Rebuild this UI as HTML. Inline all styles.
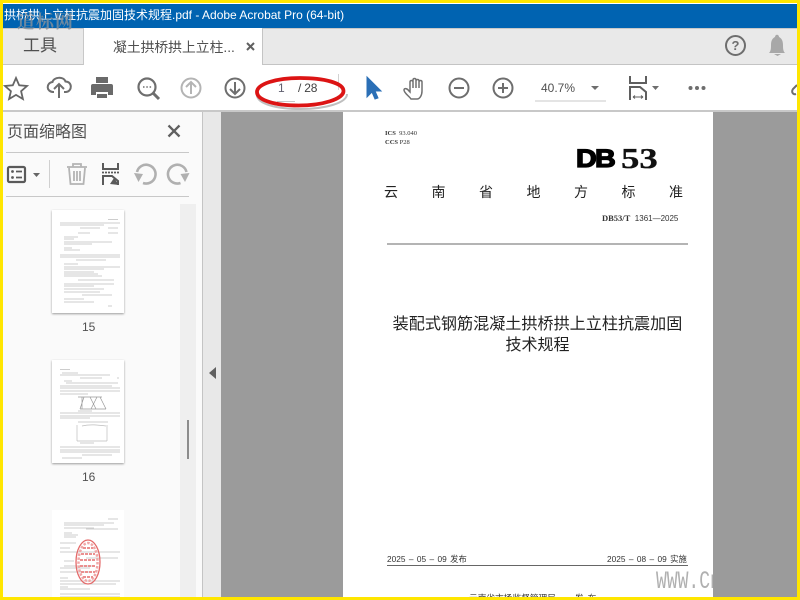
<!DOCTYPE html>
<html><head><meta charset="utf-8">
<style>
html,body{margin:0;padding:0;width:800px;height:600px;overflow:hidden;background:#fff}
body{position:relative;font-family:"Liberation Sans","Noto Sans CJK SC",sans-serif}
.a{position:absolute;white-space:nowrap}
svg{position:absolute;overflow:visible}
.s{font-family:"Liberation Serif","Noto Serif CJK SC",serif}
</style></head><body>
<div class="a" style="left:0;top:4px;width:800px;height:24px;background:#0063b1"></div>
<div class="a" style="left:4px;top:7px;color:#fff;font-size:12px;line-height:16px">拱桥拱上立柱抗震加固技术规程.pdf - Adobe Acrobat Pro (64-bit)</div>
<div class="a" style="left:0;top:28px;width:800px;background:#e9e9e9;border-top:1px solid #c8c8c8;border-bottom:1px solid #c4c4c4;box-sizing:border-box;height:37px"></div>
<div class="a" style="left:83px;top:28px;width:180px;height:37px;background:#fff;border-left:1px solid #c8c8c8;border-right:1px solid #c4c4c4;box-sizing:border-box"></div>
<div class="a" style="left:23px;top:36px;font-size:17px;line-height:20px;color:#505050">工具</div>
<div class="a" style="left:113px;top:38px;font-size:13.800px;line-height:20px;color:#505050">凝土拱桥拱上立柱...</div>
<div class="a s" style="left:17px;top:11px;font-size:18px;letter-spacing:1px;line-height:22px;color:rgba(135,145,155,.8);font-weight:700">道标网</div>
<svg style="left:0;top:0" width="800" height="110">
<path d="M247 43l7 7M254 43l-7 7" stroke="#606060" stroke-width="2"/>
<circle cx="735.500" cy="45.500" r="9.500" fill="none" stroke="#6e6e6e" stroke-width="2"/>
<text x="735.500" y="50" font-size="13" font-weight="700" fill="#6e6e6e" text-anchor="middle" font-family="Liberation Sans">?</text>
<path d="M769 53c2-2 2-5 2-8 0-5 2-7 4-8 0-3 4-3 4 0 2 1 4 3 4 8 0 3 0 6 2 8zM774 54h7l-3.500 2z" fill="#a8a8a8"/>
<path d="M16 78l3.200 7.300 7.800.7-5.900 5.200 1.800 7.800-6.900-4.100-6.900 4.100 1.800-7.800-5.900-5.200 7.800-.7z" fill="none" stroke="#666" stroke-width="1.800"/>
<path d="M54 92h-1c-7-.5-7-9-.5-10 1-5 11-6 13-.5 7 0 7 10 .5 10.500h-2" fill="none" stroke="#6e6e6e" stroke-width="2"/><path d="M59 98V84M54 89l5-5 5 5" fill="none" stroke="#6e6e6e" stroke-width="2"/>
<path d="M96 77h12v6H96zM93 84h18a2 2 0 012 2v9h-5v-3H96v3h-5v-9a2 2 0 012-2zM97 94h10v4H97z" fill="#6a6a6a"/>
<circle cx="147" cy="87" r="8.500" fill="none" stroke="#6e6e6e" stroke-width="2.200"/><path d="M153 93l6 6" stroke="#6e6e6e" stroke-width="3"/><path d="M143 87h1.500M146.300 87h1.500M149.600 87h1.500" stroke="#6e6e6e" stroke-width="1.600"/>
<circle cx="191" cy="88" r="9.500" fill="none" stroke="#b4b4b4" stroke-width="2"/><path d="M191 94V82M186 87l5-5 5 5" fill="none" stroke="#b4b4b4" stroke-width="2"/>
<circle cx="235" cy="88" r="9.500" fill="none" stroke="#6e6e6e" stroke-width="2"/><path d="M235 82v12M230 89l5 5 5-5" fill="none" stroke="#6e6e6e" stroke-width="2"/>
<path d="M338.500 74v16" stroke="#d2d2d2"/>
<path d="M367 77v20l5-5 3 7 3-1-3-7h6z" fill="#2b6fb6" stroke="#2b6fb6" stroke-width="1"/>
<path d="M411 99c-2-3-7-6-7-9 0-2 3-2 5 1l1 1V82c0-2 3-2 3 0v-2c0-2 3-2 3 0v1c0-2 3-2 3 0v1c0-2 3-2 3 0v9c0 4-2 8-5 8zM413 82v6M416 80v8M419 81v7" fill="none" stroke="#707070" stroke-width="1.500"/>
<circle cx="459" cy="88" r="9.500" fill="none" stroke="#6e6e6e" stroke-width="2"/><path d="M454 88h10" stroke="#6e6e6e" stroke-width="2"/>
<circle cx="503" cy="88" r="9.500" fill="none" stroke="#6e6e6e" stroke-width="2"/><path d="M498 88h10M503 83v10" stroke="#6e6e6e" stroke-width="2"/>
<path d="M535 101h71" stroke="#c8c8c8"/><path d="M591 86h8l-4 4z" fill="#6e6e6e"/>
<path d="M630 76v7h16v-7" fill="none" stroke="#5f5f5f" stroke-width="2"/><path d="M630 100V87h10l6 5v8" fill="none" stroke="#5f5f5f" stroke-width="2"/><path d="M633 97h10M633 97l2-1.500M633 97l2 1.500M643 97l-2-1.500M643 97l-2 1.500" stroke="#5f5f5f"/><path d="M652 86h7l-3.500 4z" fill="#6e6e6e"/>
<circle cx="690.500" cy="88" r="2" fill="#6e6e6e"/><circle cx="697" cy="88" r="2" fill="#6e6e6e"/><circle cx="703.500" cy="88" r="2" fill="#6e6e6e"/>
<path d="M797 85l-4 4c-2 3 0 6 3 5" fill="none" stroke="#6e6e6e" stroke-width="2"/>
<path d="M277 101.500h18" stroke="#c8c8c8"/>
</svg>
<div class="a" style="left:278px;top:80px;font-size:12px;line-height:16px;color:#606070">1</div>
<div class="a" style="left:298px;top:80px;font-size:12px;line-height:16px;letter-spacing:-.2px;color:#404040">/ 28</div>
<div class="a" style="left:541px;top:80px;font-size:12px;line-height:16px;color:#505050">40.7%</div>

<div class="a" style="left:0;top:110px;width:800px;height:2px;background:#c8c8c8"></div>
<div class="a" style="left:0;top:112px;width:202px;height:488px;background:#fafafa;border-right:1px solid #c4c4c4"></div>
<div class="a" style="left:203px;top:112px;width:18px;height:488px;background:#e8e8e8"></div>
<div class="a" style="left:221px;top:112px;width:579px;height:488px;background:#9b9b9b"></div>
<div class="a" style="left:180px;top:204px;width:16px;height:396px;background:#efefef"></div>
<div class="a" style="left:187px;top:420px;width:2px;height:39px;background:#8c8c8c"></div>
<svg style="left:0;top:0" width="230" height="400">
<path d="M6 152.500h183M6 196.500h183" stroke="#c8c8c8"/>
<path d="M168.500 125.500l11 11M179.500 125.500l-11 11" stroke="#606060" stroke-width="2.300"/>
<rect x="8" y="167" width="17" height="15" rx="1.500" fill="none" stroke="#5a5a5a" stroke-width="2.200"/><circle cx="12.500" cy="171.500" r="1.400" fill="#5a5a5a"/><circle cx="12.500" cy="177.500" r="1.400" fill="#5a5a5a"/><path d="M16 171.500h6M16 177.500h6" stroke="#5a5a5a" stroke-width="1.800"/>
<path d="M33 173h7l-3.500 4z" fill="#666"/><path d="M49.500 160v28" stroke="#d0d0d0"/>
<path d="M67 167h20M73 167v-3h8v3M69 168l1.500 16h13l1.500-16M74 171v10M77 171v10M80 171v10" fill="none" stroke="#b4b4b4" stroke-width="1.800"/>
<path d="M103 163v6h15v-6" fill="none" stroke="#5a5a5a" stroke-width="2"/><path d="M102 172.500h17" stroke="#5a5a5a" stroke-width="1.800" stroke-dasharray="2 1"/>
<path d="M103 185v-9h9l6 5v4" fill="none" stroke="#5a5a5a" stroke-width="2"/><path d="M110 184l4-6 5 7z" fill="#5a5a5a"/>
<path d="M143 183A9.400 9.400 0 1 0 137 172" fill="none" stroke="#b0b0b0" stroke-width="2.600"/><path d="M134 173l9 1-4.500 8z" fill="#b0b0b0"/>
<path d="M180.500 183A9.400 9.400 0 1 1 186.500 172" fill="none" stroke="#b0b0b0" stroke-width="2.600"/><path d="M189.500 173l-9 1 4.500 8z" fill="#b0b0b0"/>
<path d="M209 373l7-6v12z" fill="#606060"/>
</svg>
<div class="a" style="left:7px;top:123px;font-size:16px;line-height:20px;color:#505050">页面缩略图</div>

<svg style="left:52px;top:210px" width="72" height="103">
<rect width="72" height="103" fill="#fff" style="filter:drop-shadow(0 1px 1px #999)"/>
<g stroke="#bdbdbd" stroke-width=".7" fill="none">
<path d="M56 9.500h10M8 13h60M8 15h44M28 18h20M56 18h10M26 23h12M56 23h10M12 27h14M12 29h10M12 32h48M12 34h28M12 38h8M12 40h16M8 45h60M8 47h60M24 50h30M12 54h14M12 57h56M12 59h40M12 62h30M12 64h34M12 66h38M26 70h36M12 74h50M12 76h30M12 79h40M12 82h36M30 85h30M12 89h20M12 92h30M56 96h4"/>
</g></svg>
<div class="a" style="left:82px;top:320px;font-size:12px;line-height:15px;color:#505050">15</div>
<svg style="left:52px;top:360px" width="72" height="103">
<rect width="72" height="103" fill="#fff" style="filter:drop-shadow(0 1px 1px #999)"/>
<g stroke="#bdbdbd" stroke-width=".7" fill="none">
<path d="M8 9.500h10M10 13h16M8 15h50M28 18h22M65 18h2M12 21h8M14 23h52M8 26h52M8 28h60M8 31h60M8 34h28"/>
<path d="M26 37h24M32 37l-4 12M38 37l6 12M45 37l-6 12M48 37l6 12M28 49h26M30 37v12" stroke="#999"/>
<path d="M26 51h14M8 53h60M8 56h60M8 58h30M26 62h30M25 65v16M25 81h30M55 65v16M30 66c8-2 16-1 24 0M28 83h14M8 87h60M8 90h60M8 92h60M30 95h30M10 98h20"/>
</g></svg>
<div class="a" style="left:82px;top:470px;font-size:12px;line-height:15px;color:#505050">16</div>
<svg style="left:52px;top:510px" width="72" height="90">
<rect width="72" height="95" fill="#fff"/>
<g stroke="#bdbdbd" stroke-width=".7" fill="none">
<path d="M56 9h10M12 13h50M12 15h40M12 18h30M34 19h32M12 23h8M12 25h14M12 27h12M8 33h16M8 38h10M8 42h60M34 48h32M12 51h10M12 56h30M8 58h30M8 62h30M8 68h8M8 71h60M8 74h56M8 77h8M8 79h30M8 84h60M8 87h60"/>
</g>
<ellipse cx="36" cy="52" rx="12" ry="22" fill="none" stroke="#e46a6a" stroke-width="1.300"/>
<ellipse cx="36" cy="52" rx="9.500" ry="19" fill="none" stroke="#f0a8a8" stroke-width="2.500" stroke-dasharray="2.500 1.500"/>
<path d="M31 38h10M29 44h14M28 50h16M28 56h16M29 62h14M31 67h10" stroke="#eb9090" stroke-width="2" stroke-dasharray="3 1"/>
</svg>

<div class="a" style="left:343px;top:112px;width:370px;height:488px;background:#fff"></div>
<div class="a s" style="left:385px;top:130px;font-size:6.500px;line-height:7px;color:#333"><b>ICS</b>&nbsp; 93.040</div>
<div class="a s" style="left:385px;top:139px;font-size:6.500px;line-height:7px;color:#333"><b>CCS</b> P28</div>
<div class="a" style="left:576px;top:144px;font-size:25px;line-height:30px;font-weight:900;color:#000;letter-spacing:-1.500px;-webkit-text-stroke:1.300px #000;transform-origin:0 0;transform:scaleX(1.150)">DB</div>
<div class="a s" style="left:621px;top:143px;font-size:29px;line-height:32px;font-weight:700;color:#111;-webkit-text-stroke:.3px #111;transform-origin:0 0;transform:scaleX(1.270)">53</div>
<div class="a" style="left:384px;top:182px;font-size:14px;line-height:20px;color:#222;letter-spacing:33.500px">云南省地方标准</div>
<div class="a" style="left:602px;top:213px;font-size:8px;line-height:10px;color:#333"><b class="s" style="font-size:8.500px">DB53/T</b>&nbsp; 1361—2025</div>
<div class="a" style="left:387px;top:243px;width:301px;height:2px;background:#b4b4b4"></div>
<div class="a" style="left:343px;top:313px;width:389px;text-align:center;font-size:16.100px;line-height:22px;color:#222">装配式钢筋混凝土拱桥拱上立柱抗震加固</div>
<div class="a" style="left:343px;top:336px;width:389px;text-align:center;font-size:16px;line-height:20px;color:#222">技术规程</div>
<div class="a" style="left:387px;top:553px;font-size:8.300px;line-height:12px;word-spacing:1.100px;color:#333">2025 – 05 – 09 发布</div>
<div class="a" style="left:607px;top:553px;font-size:8.300px;line-height:12px;word-spacing:1.100px;color:#333">2025 – 08 – 09 实施</div>
<div class="a" style="left:387px;top:565px;width:301px;height:1px;background:#666"></div>
<div class="a" style="left:469px;top:591px;font-size:8.700px;line-height:14px;color:#333">云南省市场监督管理局<span style="margin-left:19px">发</span><span style="margin-left:4px">布</span></div>
<div class="a" style="left:656px;top:569px;width:57px;height:26px;overflow:hidden"><div class="a" style="left:0;top:0;font-family:'Liberation Mono',monospace;font-size:25px;line-height:26px;color:#b0b0b0;transform-origin:0 0;transform:scaleX(.72)">WWW.Cn</div></div>

<svg style="left:0;top:0" width="800" height="600">
<path d="M345 91c0 9-22 15-46 15-24 0-44-5-44-14" fill="none" stroke="#8a8a8a" stroke-width="2" opacity=".55" transform="translate(2,3)"/>
<path d="M343.500 91c0 8-21 14.500-45 14.500-23 0-41.500-5-41.500-13.500 0-8 19-14 43-14 24 0 43.500 5 43.500 13z" fill="none" stroke="#dc1414" stroke-width="3.800"/>
</svg>
<div class="a" style="left:0;top:0;width:800px;height:600px;box-sizing:border-box;border:3px solid #ffe600;border-top-width:3.500px"></div>
</body></html>
